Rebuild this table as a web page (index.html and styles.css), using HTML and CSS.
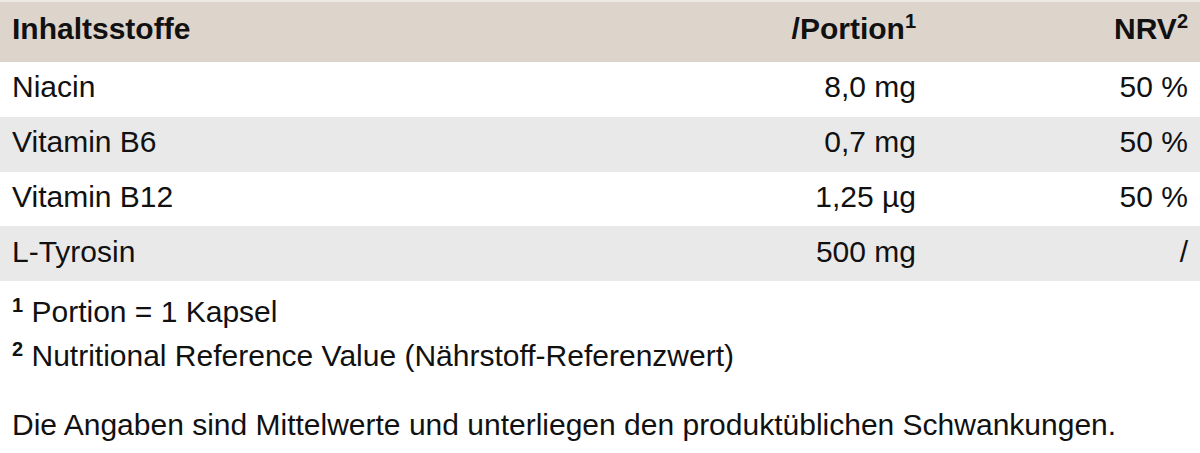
FILE: index.html
```html
<!DOCTYPE html>
<html lang="de">
<head>
<meta charset="utf-8">
<link rel="stylesheet" href="styles.css">
</head>
<body>
<div class="page">
  <table class="nutri">
    <thead>
      <tr>
        <th class="c-name">Inhaltsstoffe</th>
        <th class="c-portion">/Portion<sup>1</sup></th>
        <th class="c-nrv">NRV<sup>2</sup></th>
      </tr>
    </thead>
    <tbody>
      <tr><td class="c-name">Niacin</td><td class="c-portion">8,0 mg</td><td class="c-nrv">50 %</td></tr>
      <tr class="alt"><td class="c-name">Vitamin B6</td><td class="c-portion">0,7 mg</td><td class="c-nrv">50 %</td></tr>
      <tr><td class="c-name">Vitamin B12</td><td class="c-portion">1,25 µg</td><td class="c-nrv">50 %</td></tr>
      <tr class="alt"><td class="c-name">L-Tyrosin</td><td class="c-portion">500 mg</td><td class="c-nrv">/</td></tr>
    </tbody>
  </table>
  <div class="notes">
    <p class="note"><sup>1</sup> Portion = 1 Kapsel</p>
    <p class="note"><sup>2</sup> Nutritional Reference Value (Nährstoff-Referenzwert)</p>
    <p class="disclaimer">Die Angaben sind Mittelwerte und unterliegen den produktüblichen Schwankungen.</p>
  </div>
</div>
</body>
</html>
```

FILE: styles.css
```css
html, body {
  margin: 0;
  padding: 0;
  background: #ffffff;
}
body {
  font-family: "Liberation Sans", Arial, Helvetica, sans-serif;
  color: #111111;
  font-size: 30px;
}
.page {
  width: 1200px;
  padding-top: 2px;
  background: linear-gradient(#ece8e2, #ece8e2) top / 100% 2px no-repeat;
}
.nutri {
  width: 100%;
  border-collapse: collapse;
}
.nutri th {
  background: #ddd5cb;
  font-weight: bold;
  height: 54px;
  padding: 0 12px 6px;
  vertical-align: middle;
}
.nutri td {
  height: 50.75px;
  padding: 0 12px 4px;
  vertical-align: middle;
  font-weight: normal;
}
.nutri tr.alt td {
  background: #e9e9e9;
}
.c-name { text-align: left; }
.c-portion { text-align: right; width: 400px; }
.c-nrv { text-align: right; width: 248px; }
.nutri sup {
  font-size: 20px;
  line-height: 0;
  vertical-align: 11px;
}
.notes {
  padding: 9px 12px 0;
}
.note {
  margin: 0;
  line-height: 44px;
}
.note sup {
  font-size: 20px;
  font-weight: bold;
  line-height: 0;
  vertical-align: 10px;
}
.disclaimer {
  margin: 25px 0 0;
  line-height: 44px;
}
```
